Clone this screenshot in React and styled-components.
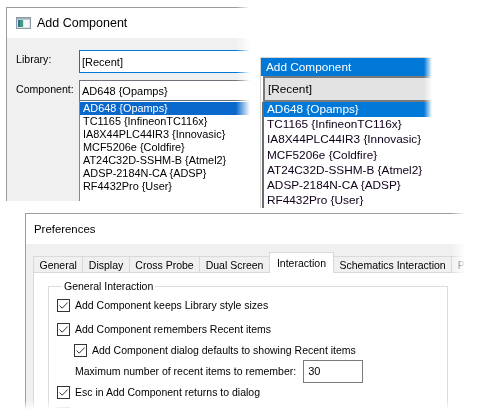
import React from 'react';
import styled, { createGlobalStyle } from 'styled-components';

const GlobalStyle = createGlobalStyle`
    body {
        margin: 0;
        background: #fff;
    }
`;

const Canvas = styled.div`
    position: relative;
    width: 480px;
    height: 419px;
    overflow: hidden;
    background: #fff;
    font-family: "Liberation Sans", Arial, sans-serif;
    color: #000;
`;

// a screenshot pasted on the canvas, its torn edges fade out
const Shot = styled.div`
    position: absolute;
    left: ${p => p.$x}px;
    top: ${p => p.$y}px;
    width: ${p => p.$w}px;
    height: ${p => p.$h}px;
    box-sizing: border-box;
    display: flex;
    flex-direction: column;
    overflow: hidden;
    background: ${p => p.$bg || '#f0f0f0'};
    border-left: 1px solid ${p => p.$edge || '#9c9c9c'};
    border-top: 1px solid ${p => p.$edge || '#9c9c9c'};
    -webkit-mask-image:
        linear-gradient(to right, #000 calc(100% - ${p => p.$fadeX || 0}px), transparent),
        linear-gradient(to bottom, #000 calc(100% - ${p => p.$fadeY || 0}px), transparent);
    -webkit-mask-composite: source-in;
    mask-image:
        linear-gradient(to right, #000 calc(100% - ${p => p.$fadeX || 0}px), transparent),
        linear-gradient(to bottom, #000 calc(100% - ${p => p.$fadeY || 0}px), transparent);
    mask-composite: intersect;
`;

const TitleBar = styled.div`
    flex: none;
    height: 30px;
    display: flex;
    align-items: center;
    gap: 6px;
    padding-left: ${p => p.$pad || 9}px;
    background: #fff;
    font-size: ${p => p.$size || 12.5}px;
    white-space: nowrap;
`;

/* ---- classic Add Component dialog ---- */

const Form = styled.div`
    display: grid;
    grid-template-columns: 63px 1fr;
    row-gap: 7px;
    padding: 12px 0 0 9px;
    font-size: 10.6px;
    flex: 1;
`;

const FieldLabel = styled.div`
    line-height: 18px;
    white-space: nowrap;
`;

const TextBox = styled.div`
    height: ${p => p.$h}px;
    box-sizing: border-box;
    display: flex;
    align-items: center;
    padding-left: 2px;
    background: #fff;
    border: 1px solid ${p => (p.$focused ? '#0078d7' : '#6e7379')};
    border-right: none;
    font-size: 11px;
    white-space: nowrap;
`;

const ComboColumn = styled.div`
    display: flex;
    flex-direction: column;
`;

const DropList = styled.div`
    flex: 1;
    background: #fff;
    border-left: 1px solid #828790;
    padding: 1px 0 8px;
    font-size: 10.9px;
`;

const DropItem = styled.div`
    height: 13px;
    line-height: 13px;
    padding-left: 3px;
    white-space: nowrap;
    background: ${p => (p.$selected ? '#0a68cc' : 'transparent')};
    color: ${p => (p.$selected ? '#fff' : '#000')};
`;

/* ---- flat Add Component popup ---- */

const BlueBar = styled.div`
    flex: none;
    height: 18px;
    display: flex;
    align-items: center;
    padding-left: 5px;
    background: #0078d7;
    color: #fff;
    font-size: 11.8px;
    white-space: nowrap;
`;

const FlatCombo = styled.div`
    flex: none;
    margin-left: 2px;
    height: 26px;
    box-sizing: border-box;
    display: flex;
    align-items: center;
    padding-left: 3px;
    background: #e3e3e3;
    border: 2px solid #7a7a7a;
    border-right: none;
    font-size: 11.8px;
    white-space: nowrap;
`;

const FlatList = styled.div`
    flex: 1;
    margin-left: 1px;
    border-left: 2px solid #6b6b6b;
    background: #fff;
    font-size: 11.8px;
`;

const FlatItem = styled.div`
    height: 15.2px;
    line-height: 15.2px;
    padding-left: 3px;
    white-space: nowrap;
    background: ${p => (p.$selected ? '#0078d7' : 'transparent')};
    color: ${p => (p.$selected ? '#fff' : '#10001a')};
`;

/* ---- Preferences ---- */

const PrefBody = styled.div`
    flex: 1;
    display: flex;
    flex-direction: column;
    padding-top: 8px;
    font-size: 10.5px;
    min-height: 0;
`;

const TabStrip = styled.div`
    flex: none;
    height: 20px;
    display: flex;
    align-items: flex-end;
    padding-left: 7px;
    white-space: nowrap;
`;

const Tab = styled.div`
    position: relative;
    flex: none;
    height: ${p => (p.$active ? 21 : 16)}px;
    box-sizing: border-box;
    display: flex;
    align-items: center;
    padding: 0 ${p => (p.$active ? 7 : 5.5)}px;
    margin: 0 -1px ${p => (p.$active ? -1 : 0)}px 0;
    border: 1px solid #d9d9d9;
    border-bottom: none;
    background: ${p => (p.$active ? '#fff' : '#f0f0f0')};
    z-index: ${p => (p.$active ? 2 : 1)};
`;

const TabPanel = styled.div`
    flex: 1;
    min-height: 0;
    margin-left: 7px;
    background: #fff;
    border: 1px solid #d9d9d9;
    border-bottom: none;
    overflow: hidden;
`;

const Group = styled.fieldset`
    margin: 7px 16px 0 14px;
    padding: 3px 8px 6px;
    border: 1px solid #dcdcdc;
    min-width: 0;
    display: flex;
    flex-direction: column;
    gap: 1px;
`;

const GroupTitle = styled.legend`
    margin-left: 5px;
    padding: 0 2px;
    line-height: 12px;
`;

const OptionRow = styled.div`
    height: 20px;
    display: flex;
    align-items: center;
    gap: 5px;
    padding-left: ${p => p.$indent || 0}px;
    margin-top: ${p => p.$gapTop || 0}px;
    white-space: nowrap;
`;

const Box = styled.span`
    flex: none;
    width: 13px;
    height: 13px;
    box-sizing: border-box;
    border: 1px solid ${p => (p.$disabled ? '#bcbcbc' : '#333')};
    background: #fff;
    display: flex;
    align-items: center;
    justify-content: center;
`;

const NumberBox = styled.div`
    width: 60px;
    height: 23px;
    box-sizing: border-box;
    margin-left: 2px;
    border: 1px solid #7a7a7a;
    display: flex;
    align-items: center;
    padding-left: 4px;
    font-size: 11px;
`;

function DialogIcon() {
    return (
        <svg width="15" height="12" viewBox="0 0 15 12">
            <rect x="0.5" y="0.5" width="14" height="11" fill="#dfe6ea" stroke="#8d9aa4" />
            <rect x="1" y="1" width="13" height="1.5" fill="#9fb0bc" />
            <rect x="2" y="3" width="5" height="7" fill="#3f9a86" />
            <rect x="2" y="3" width="2" height="7" fill="#2f6f9c" />
            <rect x="8" y="3" width="5" height="7" fill="#f4f7f9" />
        </svg>
    );
}

function Checkbox({ checked, disabled }) {
    return (
        <Box $disabled={disabled}>
            {checked && (
                <svg width="11" height="11" viewBox="0 0 11 11">
                    <path d="M1.5 5.5 L4.2 8.2 L9.6 2.6" fill="none" stroke="#333" strokeWidth="1" />
                </svg>
            )}
        </Box>
    );
}

const parts = [
    'AD648 {Opamps}',
    'TC1165 {InfineonTC116x}',
    'IA8X44PLC44IR3 {Innovasic}',
    'MCF5206e {Coldfire}',
    'AT24C32D-SSHM-B {Atmel2}',
    'ADSP-2184N-CA {ADSP}',
    'RF4432Pro {User}',
];

const tabs = ['General', 'Display', 'Cross Probe', 'Dual Screen', 'Interaction', 'Schematics Interaction', 'P'];

function App() {
    return (
        <Canvas>
            <GlobalStyle />

            <Shot $x={6} $y={7} $w={244} $h={194} $fadeX={14}>
                <TitleBar>
                    <DialogIcon />
                    <span>Add Component</span>
                </TitleBar>
                <Form>
                    <FieldLabel>Library:</FieldLabel>
                    <TextBox $h={23} $focused>[Recent]</TextBox>
                    <FieldLabel>Component:</FieldLabel>
                    <ComboColumn>
                        <TextBox $h={21}>{parts[0]}</TextBox>
                        <DropList>
                            {parts.map((part, key) =>
                                <DropItem key={key} $selected={key === 0}>{part}</DropItem>
                            )}
                        </DropList>
                    </ComboColumn>
                </Form>
            </Shot>

            <Shot $x={260} $y={57} $w={172} $h={151} $bg="#fff" $edge="#d4d4d4" $fadeX={8}>
                <BlueBar>Add Component</BlueBar>
                <FlatCombo>[Recent]</FlatCombo>
                <FlatList>
                    {parts.map((part, key) =>
                        <FlatItem key={key} $selected={key === 0}>{part}</FlatItem>
                    )}
                </FlatList>
            </Shot>

            <Shot $x={25} $y={213} $w={440} $h={197} $fadeX={14} $fadeY={10}>
                <TitleBar $pad={8} $size={11.4}>Preferences</TitleBar>
                <PrefBody>
                    <TabStrip>
                        {tabs.map((tab, key) =>
                            <Tab key={key} $active={tab === 'Interaction'}>{tab}</Tab>
                        )}
                    </TabStrip>
                    <TabPanel>
                        <Group>
                            <GroupTitle>General Interaction</GroupTitle>
                            <OptionRow>
                                <Checkbox checked />
                                <span>Add Component keeps Library style sizes</span>
                            </OptionRow>
                            <OptionRow $gapTop={3}>
                                <Checkbox checked />
                                <span>Add Component remembers Recent items</span>
                            </OptionRow>
                            <OptionRow $indent={17}>
                                <Checkbox checked />
                                <span>Add Component dialog defaults to showing Recent items</span>
                            </OptionRow>
                            <OptionRow $indent={18}>
                                <span>Maximum number of recent items to remember:</span>
                                <NumberBox>30</NumberBox>
                            </OptionRow>
                            <OptionRow>
                                <Checkbox checked />
                                <span>Esc in Add Component returns to dialog</span>
                            </OptionRow>
                            <OptionRow>
                                <Checkbox disabled />
                            </OptionRow>
                        </Group>
                    </TabPanel>
                </PrefBody>
            </Shot>
        </Canvas>
    );
}

export default App;
